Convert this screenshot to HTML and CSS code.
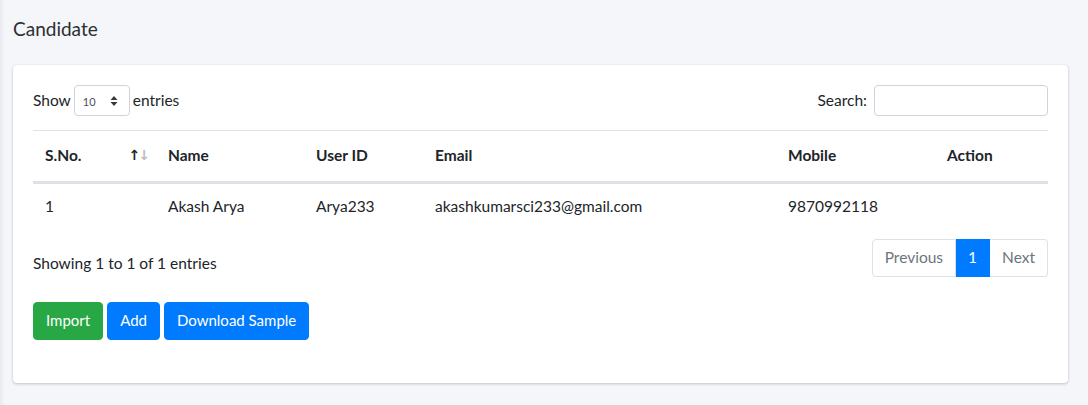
FILE: index.html
```html
<!DOCTYPE html>
<html>
<head>
<meta charset="utf-8">
<link rel="stylesheet" href="styles.css">
</head>
<body>
<div class="wrapper">
  <div class="content-header">Candidate</div>
  <div class="card">
    <div class="dt-top">
      <div class="length">
        <span>Show</span>
        <div class="select">
          <span class="select-val">10</span>
          <svg class="caret" width="8" height="12" viewBox="0 0 8 12"><path d="M4 1 L7.5 5 L0.5 5 Z M4 11 L7.5 7 L0.5 7 Z" fill="#343a40"/></svg>
        </div>
        <span>entries</span>
      </div>
      <div class="filter">
        <span>Search:</span>
        <div class="input"></div>
      </div>
    </div>
    <table class="dt">
      <colgroup>
        <col class="c1"><col class="c2"><col class="c3"><col class="c4"><col class="c5"><col class="c6">
      </colgroup>
      <thead>
        <tr>
          <th class="sorted">S.No.<span class="sort"><span class="up">↑</span><span class="down">↓</span></span></th>
          <th>Name</th>
          <th>User ID</th>
          <th>Email</th>
          <th>Mobile</th>
          <th>Action</th>
        </tr>
      </thead>
      <tbody>
        <tr>
          <td>1</td>
          <td>Akash Arya</td>
          <td>Arya233</td>
          <td>akashkumarsci233@gmail.com</td>
          <td>9870992118</td>
          <td></td>
        </tr>
      </tbody>
    </table>
    <div class="dt-bottom">
      <div class="info">Showing 1 to 1 of 1 entries</div>
      <ul class="pagination">
        <li class="page prev">Previous</li>
        <li class="page active">1</li>
        <li class="page next">Next</li>
      </ul>
    </div>
    <div class="actions">
      <button class="btn btn-success">Import</button>
      <button class="btn btn-primary">Add</button>
      <button class="btn btn-primary">Download Sample</button>
    </div>
  </div>
</div>
</body>
</html>
```
FILE: styles.css
```css
* { box-sizing: border-box; }
html, body { margin: 0; padding: 0; }
body {
  background: #f4f6f9;
  font-family: "Lato", "Liberation Sans", sans-serif;
  font-size: 15.5px;
  line-height: 24px;
  color: #212529;
  width: 1088px;
  height: 405px;
  overflow: hidden;
  box-shadow: inset 4px 0 4px -2px rgba(0,0,0,0.06);
}
.wrapper {
  padding: 15px 20px 0 13px;
}
.content-header {
  font-size: 19px;
  line-height: 28px;
  color: #2b2f33;
  margin-bottom: 22px;
}
.card {
  width: 1055px;
  background: #fff;
  border-radius: 4px;
  box-shadow: 0 0 1px rgba(0,0,0,0.125), 0 1px 3px rgba(0,0,0,0.2);
  padding: 20px 20px 43px 20px;
}
.dt-top {
  display: flex;
  justify-content: space-between;
  align-items: center;
  height: 31px;
  margin-bottom: 14px;
}
.length, .filter {
  display: flex;
  align-items: center;
  gap: 4px;
}
.length { gap: 3px; }
.length > span, .filter > span { position: relative; top: -1px; }
.select {
  width: 56px;
  height: 31px;
  border: 1px solid #ced4da;
  border-radius: 4px;
  display: flex;
  align-items: center;
  justify-content: space-between;
  padding: 0 11px 0 8px;
  font-size: 11px;
  color: #495057;
}
.select-val { position: relative; top: 1px; }
.filter { gap: 7px; }
.input {
  width: 174px;
  height: 31px;
  border: 1px solid #ced4da;
  border-radius: 4px;
}
table.dt {
  width: 1015px;
  border-collapse: collapse;
  table-layout: fixed;
}
col.c1 { width: 123px; }
col.c2 { width: 148px; }
col.c3 { width: 119px; }
col.c4 { width: 353px; }
col.c5 { width: 159px; }
col.c6 { width: 113px; }
th, td {
  padding: 11px 12px 13px;
  text-align: left;
  vertical-align: middle;
}
th {
  font-weight: 700;
  border-top: 1px solid #dee2e6;
  border-bottom: 3px solid #dee2e6;
  height: 52px;
  position: relative;
}
td { height: 48px; padding-top: 10px; padding-bottom: 14px; }
.sort {
  position: absolute;
  right: 8px;
  top: 12px;
  font-size: 14px;
  font-weight: 700;
  font-family: "DejaVu Sans", sans-serif;
  letter-spacing: -2px;
}
.sort .down { opacity: 0.3; }
.dt-bottom {
  display: flex;
  justify-content: space-between;
  align-items: flex-start;
  margin-top: 7px;
}
.info { padding-top: 12px; }
.pagination {
  list-style: none;
  margin: 0;
  padding: 0;
  display: flex;
}
.page {
  height: 38px;
  padding: 6px 12px 8px;
  border: 1px solid #dee2e6;
  color: #6c757d;
  line-height: 22px;
}
.page.prev { border-radius: 4px 0 0 4px; }
.page.next { border-radius: 0 4px 4px 0; border-left: none; }
.page.active {
  background: #007bff;
  border-color: #007bff;
  color: #fff;
  border-left: none;
}
.actions {
  display: flex;
  gap: 4px;
  margin-top: 25px;
}
.btn {
  font-family: inherit;
  font-size: 15px;
  line-height: 22px;
  height: 38px;
  padding: 6px 12px 8px;
  border: 1px solid transparent;
  border-radius: 4px;
  color: #fff;
}
.btn-success { background: #28a745; border-color: #28a745; }
.btn-primary { background: #007bff; border-color: #007bff; }
```
